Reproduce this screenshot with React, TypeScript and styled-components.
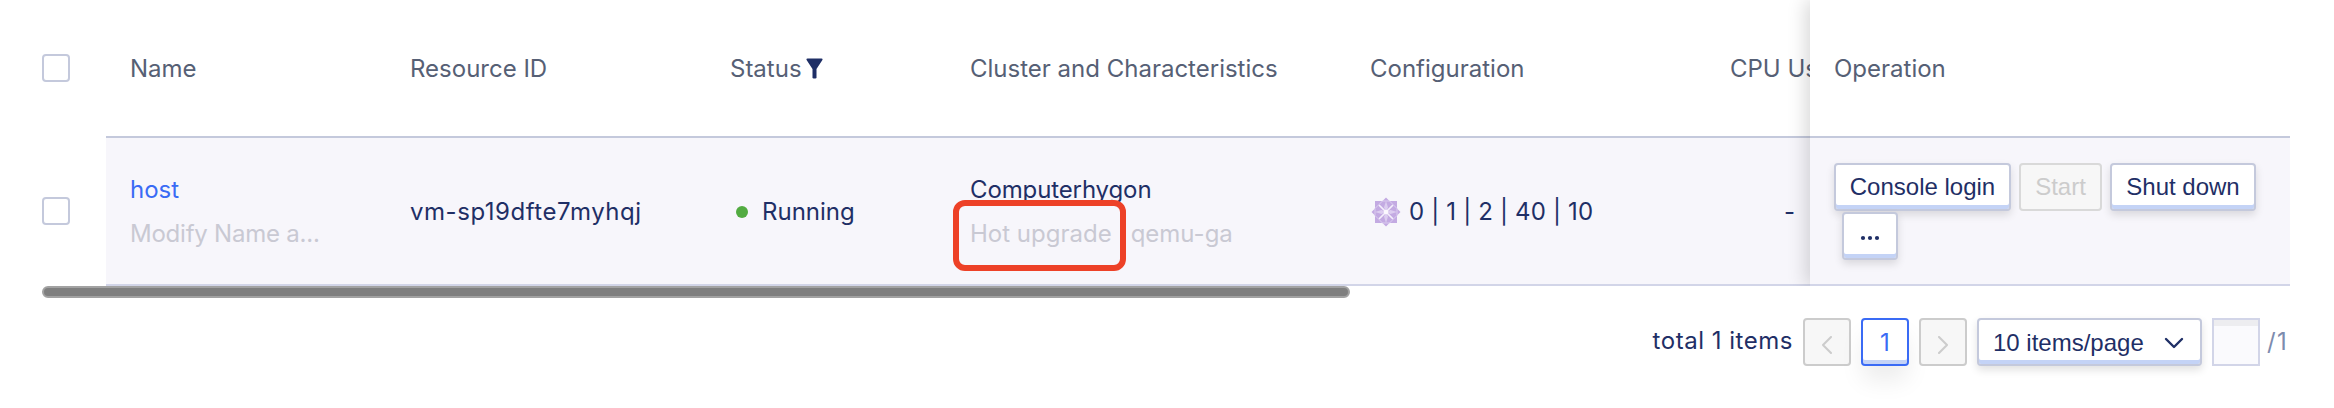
import React from "react";
import styled, { createGlobalStyle } from "styled-components";

const navy = "#1f2f66";
const line = "#c4c9dc";

const GlobalStyle = createGlobalStyle`
  *, *::before, *::after { box-sizing: border-box; }
  body {
    margin: 0;
    background: #fff;
    font-family: Inter, sans-serif;
    font-size: 24px;
    color: ${navy};
  }
`;

const Page = styled.main`
  width: 2334px;
  height: 408px;
  padding: 0 44px 0 42px;
  overflow: hidden;
`;

const TableArea = styled.section`
  display: flex;
  height: 286px;
  overflow: hidden;
`;

const SelectColumn = styled.div`
  flex: 0 0 64px;
  display: grid;
  grid-template-rows: 136px 150px;
  align-items: center;
`;

const Checkbox = styled.span`
  display: block;
  width: 28px;
  height: 28px;
  border: 2px solid ${line};
  border-radius: 4px;
  background: #fff;
`;

const ScrollPane = styled.div`
  flex: 0 0 1704px;
  overflow: hidden;
`;

const PinnedPane = styled.div`
  flex: 0 0 480px;
  background: #fff;
  box-shadow: -4px 0 18px rgba(0, 0, 0, 0.16);
`;

const Row = styled.div<{ $columns: string; $head?: boolean }>`
  display: grid;
  grid-template-columns: ${(p) => p.$columns};
  align-items: center;
  height: ${(p) => (p.$head ? 138 : 148)}px;
  border-bottom: 2px solid ${(p) => (p.$head ? line : "#d2d5e8")};
  background: ${(p) => (p.$head ? "#fff" : "#f7f6fb")};
  color: ${(p) => (p.$head ? "#566075" : navy)};
`;

const Cell = styled.div<{ $end?: boolean }>`
  padding: 2px ${(p) => (p.$end ? 15 : 0)}px 0 24px;
  text-align: ${(p) => (p.$end ? "right" : "left")};
  line-height: 44px;
  white-space: nowrap;
`;

const HeadCell = styled(Cell)`
  padding-top: 1px;
`;

const StatusHead = styled(HeadCell)`
  display: flex;
  align-items: center;
  gap: 4px;
`;

const FilterIcon = styled.svg`
  width: 17px;
  height: 21px;
  margin-top: -1px;
  fill: ${navy};
`;

const NameLink = styled.a`
  display: block;
  color: #3a6bf5;
`;

const Muted = styled.div<{ $tracking?: string }>`
  color: #c9c9d3;
  letter-spacing: ${(p) => p.$tracking || "0"};
`;

const Tags = styled(Muted)`
  display: flex;
  gap: 19px;
`;

const HighlightedTag = styled.span`
  position: relative;

  &::after {
    content: "";
    position: absolute;
    left: -17px;
    top: -12px;
    width: 173px;
    height: 71px;
    border: 6px solid #ed4127;
    border-radius: 12px;
  }
`;

const ResourceId = styled.span`
  letter-spacing: 0.54px;
`;

const Compact = styled.div`
  letter-spacing: -0.12px;
`;

const Status = styled.div`
  display: flex;
  align-items: center;
  gap: 14px;
  padding-left: 6px;
`;

const Dot = styled.i`
  width: 12px;
  height: 12px;
  border-radius: 50%;
  background: #52ab41;
`;

const Specs = styled.div`
  display: flex;
  align-items: center;
  gap: 8px;
  padding-left: 1px;
  letter-spacing: 0.17px;
`;

const SystemIcon = styled.svg`
  width: 30px;
  height: 30px;
`;

const Actions = styled.div`
  display: flex;
  flex-wrap: wrap;
  gap: 1px 8px;
  padding-left: 24px;
  padding-right: 20px;
`;

const controlFace = `
  border: 2px solid ${line};
  border-radius: 4px;
  background: #fff;
  color: ${navy};
  box-shadow: inset 0 -4px 0 #c4d3f6, 0 4px 8px rgba(0, 0, 0, 0.12);
`;

const Button = styled.button<{ $width: number; $indent?: boolean }>`
  ${controlFace}
  width: ${(p) => p.$width}px;
  height: 48px;
  margin: 0 0 0 ${(p) => (p.$indent ? 8 : 0)}px;
  padding: 0;
  font: 24px / 40px "Liberation Sans", Arial, sans-serif;
  white-space: nowrap;

  &:disabled {
    border-color: #d9d9d9;
    background: #f7f7f7;
    color: #cccccc;
    box-shadow: none;
  }
`;

const DotsIcon = styled.svg`
  display: block;
  width: 20px;
  height: 6px;
  margin: 4px auto 0;
  fill: ${navy};
`;

const ScrollThumb = styled.div`
  width: 1308px;
  height: 12px;
  border: 2px solid #a2a2a2;
  border-radius: 6px;
  background: #7f7f7f;
`;

const Pagination = styled.nav`
  display: flex;
  justify-content: flex-end;
  align-items: center;
  gap: 10px;
  height: 48px;
  margin-top: 20px;
`;

const Total = styled.span`
  letter-spacing: 0.52px;
  line-height: 44px;
  margin-top: -2px;
`;

const StepButton = styled.button`
  display: grid;
  place-items: center;
  width: 48px;
  height: 48px;
  padding: 5px 0 0;
  border: 2px solid #cccccc;
  border-radius: 4px;
  background: #f7f7f7;
`;

const PageButton = styled.button`
  width: 48px;
  height: 48px;
  padding: 1px 0 0;
  border: 2px solid #3a6bf5;
  border-radius: 4px;
  background: #fff;
  color: #3a6bf5;
  font: 24px / 40px Inter, sans-serif;
  box-shadow: inset 0 -4px 0 #c4d3f6, 0 16px 24px -2px rgba(0, 0, 0, 0.08);
`;

const SizeSelect = styled.div`
  ${controlFace}
  display: flex;
  justify-content: space-between;
  width: 225px;
  height: 48px;
  padding: 0 16px 0 14px;
  font: 24px / 45px "Liberation Sans", Arial, sans-serif;
`;

const Chevron = styled.svg<{ $color: string; $weight: number }>`
  display: block;
  fill: none;
  stroke: ${(p) => p.$color};
  stroke-width: ${(p) => p.$weight};
  stroke-linecap: round;
  stroke-linejoin: round;
`;

const SelectChevron = styled(Chevron)`
  margin-top: 17px;
`;

const PageInput = styled.input`
  width: 48px;
  height: 48px;
  margin: 0;
  padding: 0;
  border: 2px solid #d2d5e8;
  border-radius: 0;
  background: #fafafd;
  box-shadow: inset 0 6px 0 #ededf0;
`;

const PageCount = styled.span`
  width: 23px;
  margin: -1px 0 0 -3px;
  color: #7d8bae;
  letter-spacing: 1.3px;
`;

const PagerLead = styled.div`
  display: flex;
  align-items: center;
  gap: 10px;
`;

const mainColumns = "280px 320px 240px 400px 360px 104px";

const Flower = () => (
  <SystemIcon viewBox="-15 -15 30 30" aria-hidden="true">
    <path
      d="M0-14.500 3.500-11H11V-3.500L14.500 0 11 3.500V11H3.500L0 14.500-3.500 11H-11V3.500L-14.500 0-11-3.500V-11H-3.500Z"
      fill="#c3aae2"
    />
    <path d="M0-11 2-4.500 0 0-2-4.500ZM0 11 2 4.500 0 0-2 4.500ZM-11 0-4.500-2 0 0-4.500 2ZM11 0 4.500-2 0 0 4.500 2Z" fill="#dccdf0" />
    <path d="M-7-7 7 7M7-7-7 7" stroke="#f4effb" strokeWidth="1.7" />
    <path
      d="M-3.500-11-11-3.500M3.500-11 11-3.500M-3.500 11-11 3.500M3.500 11 11 3.500M-3.500-11H3.500M-3.500 11H3.500M-11-3.500V3.500M11-3.500V3.500"
      stroke="#ded0f1"
      strokeWidth=".9"
    />
    <circle r="2.3" fill="#fbf8fe" />
  </SystemIcon>
);

export default function App() {
  return (
    <>
      <GlobalStyle />
      <Page>
        <TableArea>
          <SelectColumn>
            <Checkbox role="checkbox" aria-checked="false" />
            <Checkbox role="checkbox" aria-checked="false" />
          </SelectColumn>
          <ScrollPane>
            <Row $columns={mainColumns} $head>
              <HeadCell>Name</HeadCell>
              <HeadCell>Resource ID</HeadCell>
              <StatusHead>
                Status
                <FilterIcon viewBox="0 0 17 21" aria-hidden="true">
                  <path d="M1.5 .5H15.5Q17 .6 16.4 2.1L10.5 11V20Q8.500 21.200 6.500 20V11L.6 2.100Q0 .6 1.500 .5Z" />
                </FilterIcon>
              </StatusHead>
              <HeadCell>Cluster and Characteristics</HeadCell>
              <HeadCell>Configuration</HeadCell>
              <HeadCell>CPU Us</HeadCell>
            </Row>
            <Row $columns={mainColumns}>
              <Cell>
                <NameLink>host</NameLink>
                <Muted $tracking="-0.23px">Modify Name a...</Muted>
              </Cell>
              <Cell>
                <ResourceId>vm-sp19dfte7myhqj</ResourceId>
              </Cell>
              <Cell>
                <Status>
                  <Dot />
                  Running
                </Status>
              </Cell>
              <Cell>
                <Compact>Computerhygon</Compact>
                <Tags>
                  <HighlightedTag>Hot upgrade</HighlightedTag>
                  <span>qemu-ga</span>
                </Tags>
              </Cell>
              <Cell>
                <Specs>
                  <Flower />0 | 1 | 2 | 40 | 10
                </Specs>
              </Cell>
              <Cell $end>-</Cell>
            </Row>
          </ScrollPane>
          <PinnedPane>
            <Row $columns="1fr" $head>
              <HeadCell>Operation</HeadCell>
            </Row>
            <Row $columns="1fr">
              <Actions>
                <Button $width={177}>Console login</Button>
                <Button $width={83} disabled>
                  Start
                </Button>
                <Button $width={146}>Shut down</Button>
                <Button $width={56} $indent aria-label="More">
                  <DotsIcon viewBox="0 0 20 6">
                    <circle cx="3" cy="3" r="2.1" />
                    <circle cx="10" cy="3" r="2.1" />
                    <circle cx="17" cy="3" r="2.1" />
                  </DotsIcon>
                </Button>
              </Actions>
            </Row>
          </PinnedPane>
        </TableArea>
        <ScrollThumb />
        <Pagination>
          <PagerLead>
            <Total>total 1 items</Total>
            <StepButton disabled aria-label="Previous page">
              <Chevron $color="#cccccc" $weight={2} width="12" height="18" viewBox="0 0 12 18">
                <path d="M10 1 2 9l8 8" />
              </Chevron>
            </StepButton>
          </PagerLead>
          <PageButton>1</PageButton>
          <StepButton disabled aria-label="Next page">
            <Chevron $color="#cccccc" $weight={2} width="12" height="18" viewBox="0 0 12 18">
              <path d="m2 1 8 8-8 8" />
            </Chevron>
          </StepButton>
          <SizeSelect>
            10 items/page
            <SelectChevron $color={navy} $weight={2.4} width="20" height="12" viewBox="0 0 20 12">
              <path d="m2 2 8 8 8-8" />
            </SelectChevron>
          </SizeSelect>
          <PageInput aria-label="Page" />
          <PageCount>/1</PageCount>
        </Pagination>
      </Page>
    </>
  );
}
